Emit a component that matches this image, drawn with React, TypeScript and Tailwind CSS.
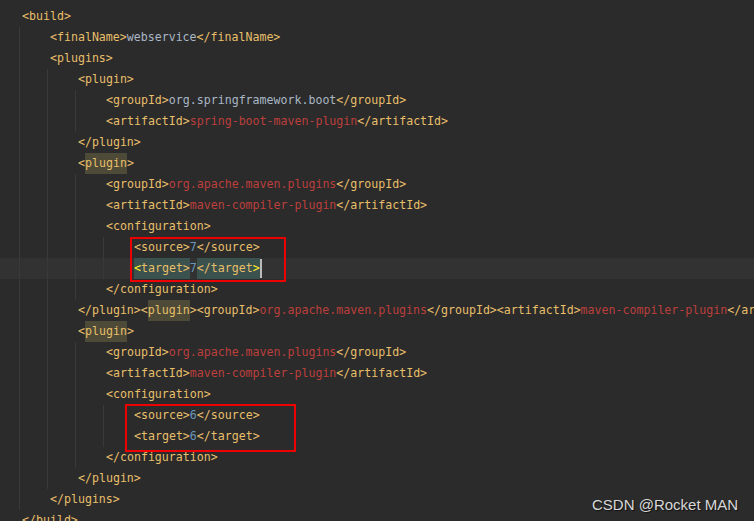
type Kind = "t" | "x" | "r" | "n" | "hl" | "tm" | "bm" | "cur";
type Seg = [string, Kind];
type Line = { indent: number; segs: Seg[]; current?: boolean };

const kindClass: Record<Kind, string> = {
  t: "text-[#e8bf6a]",
  x: "text-[#a9b7c6]",
  r: "text-[#bc3f3c]",
  n: "text-[#6897bb]",
  // identifier under caret
  hl: "text-[#e8bf6a] bg-[#4d4b37]",
  // matched tag
  tm: "text-[#e8bf6a] bg-[#3b514d]",
  // matched brace
  bm: "text-[#ffef28] bg-[#3b514d]",
  cur: "",
};

const grp = (v: string, red: boolean): Seg[] => [
  ["<groupId>", "t"],
  [v, red ? "r" : "x"],
  ["</groupId>", "t"],
];
const art = (v: string): Seg[] => [
  ["<artifactId>", "t"],
  [v, "r"],
  ["</artifactId>", "t"],
];

const lines: Line[] = [
  { indent: 0, segs: [["<build>", "t"]] },
  { indent: 1, segs: [["<finalName>", "t"], ["webservice", "x"], ["</finalName>", "t"]] },
  { indent: 1, segs: [["<plugins>", "t"]] },
  { indent: 2, segs: [["<plugin>", "t"]] },
  { indent: 3, segs: grp("org.springframework.boot", false) },
  { indent: 3, segs: art("spring-boot-maven-plugin") },
  { indent: 2, segs: [["</plugin>", "t"]] },
  { indent: 2, segs: [["<", "t"], ["plugin", "hl"], [">", "t"]] },
  { indent: 3, segs: grp("org.apache.maven.plugins", true) },
  { indent: 3, segs: art("maven-compiler-plugin") },
  { indent: 3, segs: [["<configuration>", "t"]] },
  { indent: 4, segs: [["<source>", "t"], ["7", "n"], ["</source>", "t"]] },
  {
    indent: 4,
    current: true,
    segs: [
      ["<", "bm"],
      ["target>", "tm"],
      ["7", "n"],
      ["</target", "tm"],
      [">", "bm"],
      ["", "cur"],
    ],
  },
  { indent: 3, segs: [["</configuration>", "t"]] },
  {
    indent: 2,
    segs: [
      ["</plugin><", "t"],
      ["plugin", "hl"],
      ["><groupId>", "t"],
      ["org.apache.maven.plugins", "r"],
      ["</groupId><artifactId>", "t"],
      ["maven-compiler-plugin", "r"],
      ["</artifactId>", "t"],
    ],
  },
  { indent: 2, segs: [["<", "t"], ["plugin", "hl"], [">", "t"]] },
  { indent: 3, segs: grp("org.apache.maven.plugins", true) },
  { indent: 3, segs: art("maven-compiler-plugin") },
  { indent: 3, segs: [["<configuration>", "t"]] },
  { indent: 4, segs: [["<source>", "t"], ["6", "n"], ["</source>", "t"]] },
  { indent: 4, segs: [["<target>", "t"], ["6", "n"], ["</target>", "t"]] },
  { indent: 3, segs: [["</configuration>", "t"]] },
  { indent: 2, segs: [["</plugin>", "t"]] },
  { indent: 1, segs: [["</plugins>", "t"]] },
  { indent: 0, segs: [["</build>", "t"]] },
];

function CodeLine({ line }: { line: Line }) {
  return (
    <div
      className={`flex h-[21px] items-stretch pl-[19px] whitespace-pre ${
        line.current ? "bg-[#323232]" : ""
      }`}
    >
      {/* indent guides */}
      {Array.from({ length: line.indent }).map((_, i) => (
        <span key={i} className="w-[28px] shrink-0 border-l border-[#393939]" />
      ))}
      <span className="ml-[3px] flex items-stretch leading-[21px]">
        {line.segs.map(([text, kind], i) =>
          kind === "cur" ? (
            <span key={i} className="my-[1px] w-[2px] bg-[#bbbbbb]" />
          ) : (
            <span key={i} className={kindClass[kind]}>
              {text}
            </span>
          ),
        )}
      </span>
    </div>
  );
}

export default function App() {
  return (
    <div className="relative h-[521px] w-[754px] overflow-hidden bg-[#2b2b2b] pt-[6px] font-['DejaVu_Sans_Mono',monospace] text-[11.6px]">
      {lines.map((line, i) => (
        <CodeLine key={i} line={line} />
      ))}

      {/* annotation boxes */}
      <div className="absolute left-[130px] top-[237px] h-[45px] w-[156px] border-2 border-[#ee0000]" />
      <div className="absolute left-[125px] top-[404px] h-[48px] w-[171px] border-2 border-[#ee0000]" />

      {/* watermark */}
      <div className="absolute left-[592px] top-[496px] font-['Liberation_Sans',sans-serif] text-[15px] leading-[18px] text-[#d8d8d8] [text-shadow:1px_1px_1px_rgba(0,0,0,0.6)]">
        CSDN @Rocket MAN
      </div>
    </div>
  );
}
